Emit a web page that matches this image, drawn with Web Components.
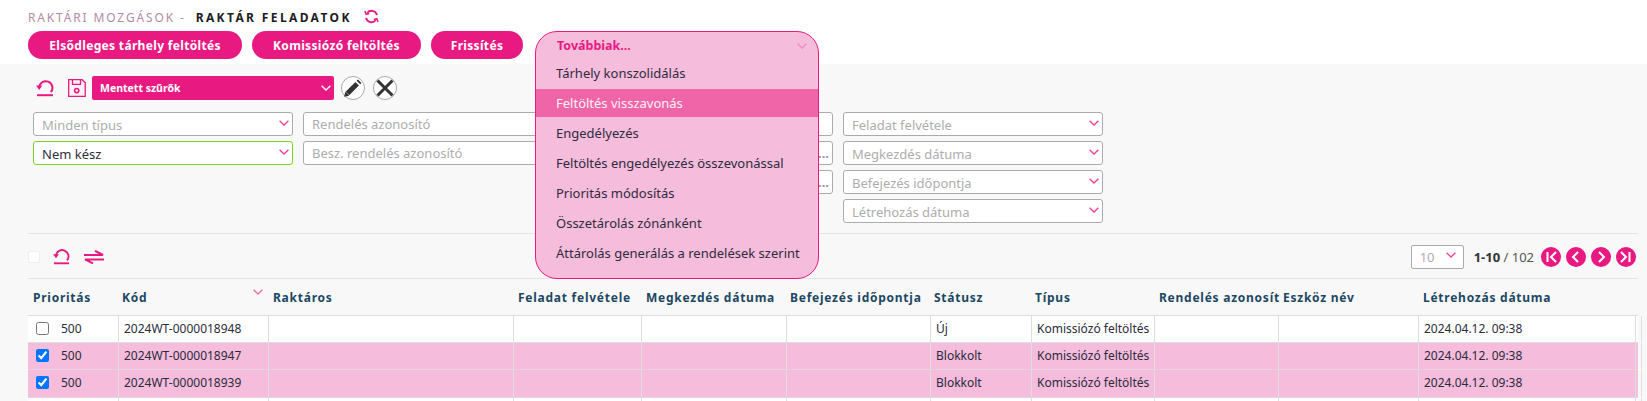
<!DOCTYPE html>
<html lang="hu">
<head>
<meta charset="utf-8">
<title>Raktár feladatok</title>
<style>
    html, body { margin: 0; height: 401px; overflow: hidden; background: #f8f8f8; }
    body { font-family: "Noto Sans", "Open Sans", sans-serif; font-size: 12px; color: #2b2b3b; }
</style>
</head>
<body>
<wh-header></wh-header>
<wh-filters></wh-filters>
<wh-list-tools></wh-list-tools>
<wh-table></wh-table>

<script>
const PINK = "#e81a81";
const CHEVRON = `<svg width="10" height="6" viewBox="0 0 10 6" fill="none" stroke="currentColor" stroke-width="1.3"><path d="M.6.7L5 5 9.4.7"/></svg>`;
const UNDO = `<path d="M3.2 8.5a6.6 6.6 0 1 1 11.6 4.6" fill="none" stroke="${PINK}" stroke-width="2"/><path d="M0 6.6h6.2l-3 4.3z" fill="${PINK}"/><path d="M1 16.2h16" stroke="${PINK}" stroke-width="2"/>`;

class PillButton extends HTMLElement {
    constructor() {
        super();
        this.attachShadow({mode: "open"}).innerHTML = `
            <style>
                :host {
                    display: flex; align-items: center; justify-content: center;
                    height: 28px; border-radius: 14px; background: ${PINK}; color: #fff;
                    font: bold 12px "Noto Sans", sans-serif; letter-spacing: .33px;
                }
            </style>
            <slot></slot>`;
    }
}

class MoreMenu extends HTMLElement {
    constructor() {
        super();
        this.attachShadow({mode: "open"}).innerHTML = `
            <style>
                :host {
                    position: absolute; left: 535px; top: 31px; width: 284px; height: 248px;
                    box-sizing: border-box; border: 1px solid ${PINK}; border-radius: 22px;
                    background: #f5bcdb; font: 13px "Noto Sans", sans-serif; color: #2f2b3d;
                    z-index: 5;
                }
                .head {
                    display: flex; justify-content: space-between; align-items: center;
                    height: 27px; padding: 0 11px 0 21px; color: ${PINK}; font-weight: bold; font-size: 12.5px;
                }
                .head svg { color: #f08cbd; }
                .item { display: flex; align-items: center; box-sizing: border-box; height: 28px; margin-bottom: 2px; padding: 0 0 1px 20px; }
                .item.on { background: #f065a8; color: #fdf1f7; }
            </style>
            <div class="head"><span>Továbbiak...</span>${CHEVRON}</div>
            <div class="list">
                <div class="item">Tárhely konszolidálás</div>
                <div class="item on">Feltöltés visszavonás</div>
                <div class="item">Engedélyezés</div>
                <div class="item">Feltöltés engedélyezés összevonással</div>
                <div class="item">Prioritás módosítás</div>
                <div class="item">Összetárolás zónánként</div>
                <div class="item">Áttárolás generálás a rendelések szerint</div>
            </div>`;
    }
}

class WhHeader extends HTMLElement {
    constructor() {
        super();
        this.attachShadow({mode: "open"}).innerHTML = `
            <style>
                :host { display: block; height: 64px; box-sizing: border-box; padding: 6px 0 0 28px; background: #fff; }
                .title { display: flex; align-items: center; height: 25px; padding-bottom: 2px; box-sizing: border-box; font: 12px "Noto Sans", sans-serif; letter-spacing: 1.85px; }
                .sub { color: #b58aa6; }
                b { color: #1c1c24; margin-left: 10px; letter-spacing: 2.38px; }
                svg { margin-left: 12px; margin-top: -3px; }
                .btns { display: flex; gap: 10px; }
            </style>
            <div class="title">
                <span class="sub">RAKTÁRI MOZGÁSOK -</span><b>RAKTÁR FELADATOK</b>
                <svg width="15" height="15" viewBox="0 0 16 16" fill="none" stroke="${PINK}" stroke-width="2">
                    <path d="M2.2 9.5A6 6 0 0 0 12.6 12"/><path d="M13.8 6.5A6 6 0 0 0 3.4 4"/>
                    <path d="M1 2.2l1.2 3.4 3.4-.8" stroke-width="1.6"/><path d="M15 13.8l-1.2-3.4-3.4.8" stroke-width="1.6"/>
                </svg>
            </div>
            <div class="btns">
                <wh-pill style="width:214px">Elsődleges tárhely feltöltés</wh-pill>
                <wh-pill style="width:169px">Komissiózó feltöltés</wh-pill>
                <wh-pill style="width:92px">Frissítés</wh-pill>
            </div>
            <wh-more></wh-more>`;
    }
}

class FilterField extends HTMLElement {
    constructor() {
        super();
        this.attachShadow({mode: "open"}).innerHTML = `
            <style>
                :host {
                    display: flex; align-items: center; justify-content: space-between;
                    box-sizing: border-box; width: var(--w, 260px); height: 24px; padding: 0 3px 0 8px;
                    border: 1px solid #ababab; border-radius: 3px; background: #fff; color: #adadad;
                    font: 13px "Noto Sans", sans-serif;
                }
                :host([select]) { padding-top: 1px; }
                :host([ok]) { border-color: #7ed321; color: #2f2f3a; }
                :host([end]) { justify-content: flex-end; color: #8b95a5; padding-right: 3px; font-weight: bold; }
                .ico { display: flex; color: #ee3f95; margin-top: -4px; }
                .hide { display: none; }
            </style>
            <slot></slot>
            <span class="ico">${CHEVRON}</span>`;
        if (!this.hasAttribute("select")) this.shadowRoot.querySelector(".ico").className = "hide";
    }
}

class WhFilters extends HTMLElement {
    constructor() {
        super();
        this.attachShadow({mode: "open"}).innerHTML = `
            <style>
                :host { display: block; height: 170px; box-sizing: border-box; padding-top: 12px; margin: 0 9px 0 28px; border-bottom: 1px solid #e4e4e4; }
                .bar { display: flex; align-items: center; height: 24px; padding-left: 8px; }
                .saved {
                    display: flex; align-items: center; justify-content: space-between;
                    box-sizing: border-box; width: 242px; height: 24px; margin-left: 6px; padding: 0 3px 0 8px;
                    border-radius: 2px; background: ${PINK}; color: #fff; font: bold 10.5px "Noto Sans", sans-serif;
                }
                .round {
                    display: flex; align-items: center; justify-content: center; box-sizing: border-box;
                    width: 24px; height: 24px; margin-left: 7px; border: 1px solid #aaa; border-radius: 50%; background: #fff;
                }
                .round + .round { margin-left: 8px; }
                .grid { display: flex; gap: 10px; margin-top: 12px; padding-left: 5px; }
                .col { display: flex; flex-direction: column; gap: 5px; }
            </style>
            <div class="bar">
                <svg width="18" height="18" viewBox="0 0 18 18">${UNDO}</svg>
                <svg style="margin-left:14px" width="18" height="18" viewBox="0 0 18 18" fill="none" stroke="${PINK}" stroke-width="1.3">
                    <path d="M.7.7h13.5l3 3v13.6H.7z" fill="#fdf2f8"/><path d="M4.5.7v4.6h8V.7"/><circle cx="8.7" cy="11.6" r="2.1" stroke-width="1.6"/>
                </svg>
                <div class="saved"><span>Mentett szűrők</span>${CHEVRON}</div>
                <div class="round"><svg width="20" height="20" viewBox="0 0 20 20"><path d="M4.4 15.6L14.2 5.8" stroke="#333" stroke-width="5"/><path d="M15.4 4.6l1.3-1.3" stroke="#333" stroke-width="5"/><path d="M1.2 18.8l1.1-5 3.9 3.9z" fill="#333"/></svg></div>
                <div class="round"><svg width="20" height="20" viewBox="0 0 20 20"><path d="M2.5 2.5l15 15M17.5 2.5l-15 15" stroke="#333" stroke-width="3"/></svg></div>
            </div>
            <div class="grid">
                <div class="col">
                    <wh-field select>Minden típus</wh-field>
                    <wh-field select ok>Nem kész</wh-field>
                </div>
                <div class="col">
                    <wh-field>Rendelés azonosító</wh-field>
                    <wh-field>Besz. rendelés azonosító</wh-field>
                </div>
                <div class="col">
                    <wh-field></wh-field>
                    <wh-field end>...</wh-field>
                    <wh-field end>...</wh-field>
                </div>
                <div class="col">
                    <wh-field select>Feladat felvétele</wh-field>
                    <wh-field select>Megkezdés dátuma</wh-field>
                    <wh-field select>Befejezés időpontja</wh-field>
                    <wh-field select>Létrehozás dátuma</wh-field>
                </div>
            </div>`;
    }
}

class WhListTools extends HTMLElement {
    constructor() {
        super();
        const pages = [
            `<path d="M6.5 5v10M15 5l-5 5 5 5"/>`,
            `<path d="M12 5l-5 5 5 5"/>`,
            `<path d="M8 5l5 5-5 5"/>`,
            `<path d="M13.5 5v10M5 5l5 5-5 5"/>`
        ].map(p => `<svg width="20" height="20" viewBox="0 0 20 20" fill="none" stroke="#fff" stroke-width="2"><circle cx="10" cy="10" r="10" fill="${PINK}" stroke="none"/>${p}</svg>`).join("");
        this.attachShadow({mode: "open"}).innerHTML = `
            <style>
                :host {
                    display: flex; align-items: center; box-sizing: border-box; height: 45px;
                    margin: 0 9px 0 28px; padding: 1px 0 0; border-bottom: 1px solid #e4e4e4;
                    font: 13px "Noto Sans", sans-serif; color: #555;
                }
                .check { width: 12px; height: 12px; box-sizing: border-box; border: 1px solid #eee; border-radius: 2px; background: #fff; margin-top: 1px; }
                .undo { margin-left: 13px; }
                .swap { margin-left: 14px; }
                .size {
                    display: flex; align-items: center; justify-content: space-between; box-sizing: border-box;
                    width: 53px; height: 24px; margin-left: auto; padding: 1px 7px 0 8px; border: 1px solid #ababab; border-radius: 2px;
                    background: #fff; color: #adadad; font-size: 13px;
                }
                .size svg { color: #ee3f95; margin-top: -4px; }
                .count { margin-left: 10px; margin-right: 7px; }
                .count b { color: #333; }
                .pages { display: flex; gap: 5px; margin-right: 2px; }
            </style>
            <div class="check"></div>
            <svg class="undo" width="17" height="17" viewBox="0 0 18 18">${UNDO}</svg>
            <svg class="swap" width="20" height="14" viewBox="0 0 20 14" fill="none" stroke="${PINK}" stroke-width="2">
                <path d="M0 5h19L11 .8"/><path d="M20 9.4H1l8 4"/>
            </svg>
            <div class="size"><span>10</span>${CHEVRON}</div>
            <div class="count"><b>1-10</b> / 102</div>
            <div class="pages">${pages}</div>`;
    }
}

class WhTable extends HTMLElement {
    constructor() {
        super();
        const cols = [91, 150, 245, 128, 145, 144, 101, 123, 124, 140, 217, 2];
        const heads = ["Prioritás", "Kód", "Raktáros", "Feladat felvétele", "Megkezdés dátuma", "Befejezés időpontja", "Státusz", "Típus", "Rendelés azonosít", "Eszköz név", "Létrehozás dátuma", ""];
        const rows = [
            {on: false, code: "2024WT-0000018948", status: "Új", h: 27},
            {on: true, code: "2024WT-0000018947", status: "Blokkolt", h: 27},
            {on: true, code: "2024WT-0000018939", status: "Blokkolt", h: 28}
        ];
        const rowHtml = rows.map(r => `
            <div class="row ${r.on ? "on" : ""}" style="height:${r.h}px">
                <div class="cell prio"><input type="checkbox" ${r.on ? "checked" : ""}><span>500</span></div>
                <div class="cell">${r.code}</div>
                <div class="cell"></div><div class="cell"></div><div class="cell"></div><div class="cell"></div>
                <div class="cell">${r.status}</div>
                <div class="cell">Komissiózó feltöltés</div>
                <div class="cell"></div><div class="cell"></div>
                <div class="cell">2024.04.12. 09:38</div>
                <div class="cell"></div>
            </div>`).join("");
        this.attachShadow({mode: "open"}).innerHTML = `
            <style>
                :host { display: block; margin: 0 9px 0 28px; font: 12px "Noto Sans", sans-serif; color: #2b2b3b; --cols: ${cols.map(c => c + "px").join(" ")}; }
                .head, .row { display: grid; grid-template-columns: var(--cols); box-sizing: border-box; border-bottom: 1px solid #dedede; }
                .head { height: 37px; }
                .th {
                    position: relative; display: flex; align-items: center; padding: 0 0 0 4px; white-space: nowrap;
                    font: bold 12px "Noto Sans", sans-serif; letter-spacing: .75px; color: #1d4763;
                }
                .th:first-child { padding-left: 5px; }
                .th:nth-child(2), .th:nth-child(6), .th:nth-child(7), .th:nth-child(8) { padding-left: 3px; }
                .sort { position: absolute; right: 6px; top: 10px; display: flex; color: #ee6aa6; }
                .row { background: #fff; }
                .row.on { background: #f5bcdb; border-bottom-color: #e6d3dd; }
                .cell { display: flex; align-items: center; box-sizing: border-box; padding: 0 0 2px 5px; border-right: 1px solid #dedede; white-space: nowrap; overflow: hidden; }
                .prio { padding-left: 8px; }
                input { width: 13px; height: 13px; margin: 0 12px 0 0; }
                .row.empty { border: 0; height: 5px; }
            </style>
            <div class="head">
                ${heads.map((h, i) => `<div class="th">${h}${i === 1 ? `<span class="sort">${CHEVRON}</span>` : ""}</div>`).join("")}
            </div>
            ${rowHtml}
            <div class="row empty">${cols.map(() => `<div class="cell"></div>`).join("")}</div>`;
    }
}

customElements.define("wh-pill", PillButton);
customElements.define("wh-more", MoreMenu);
customElements.define("wh-header", WhHeader);
customElements.define("wh-field", FilterField);
customElements.define("wh-filters", WhFilters);
customElements.define("wh-list-tools", WhListTools);
customElements.define("wh-table", WhTable);
</script>
</body>
</html>
